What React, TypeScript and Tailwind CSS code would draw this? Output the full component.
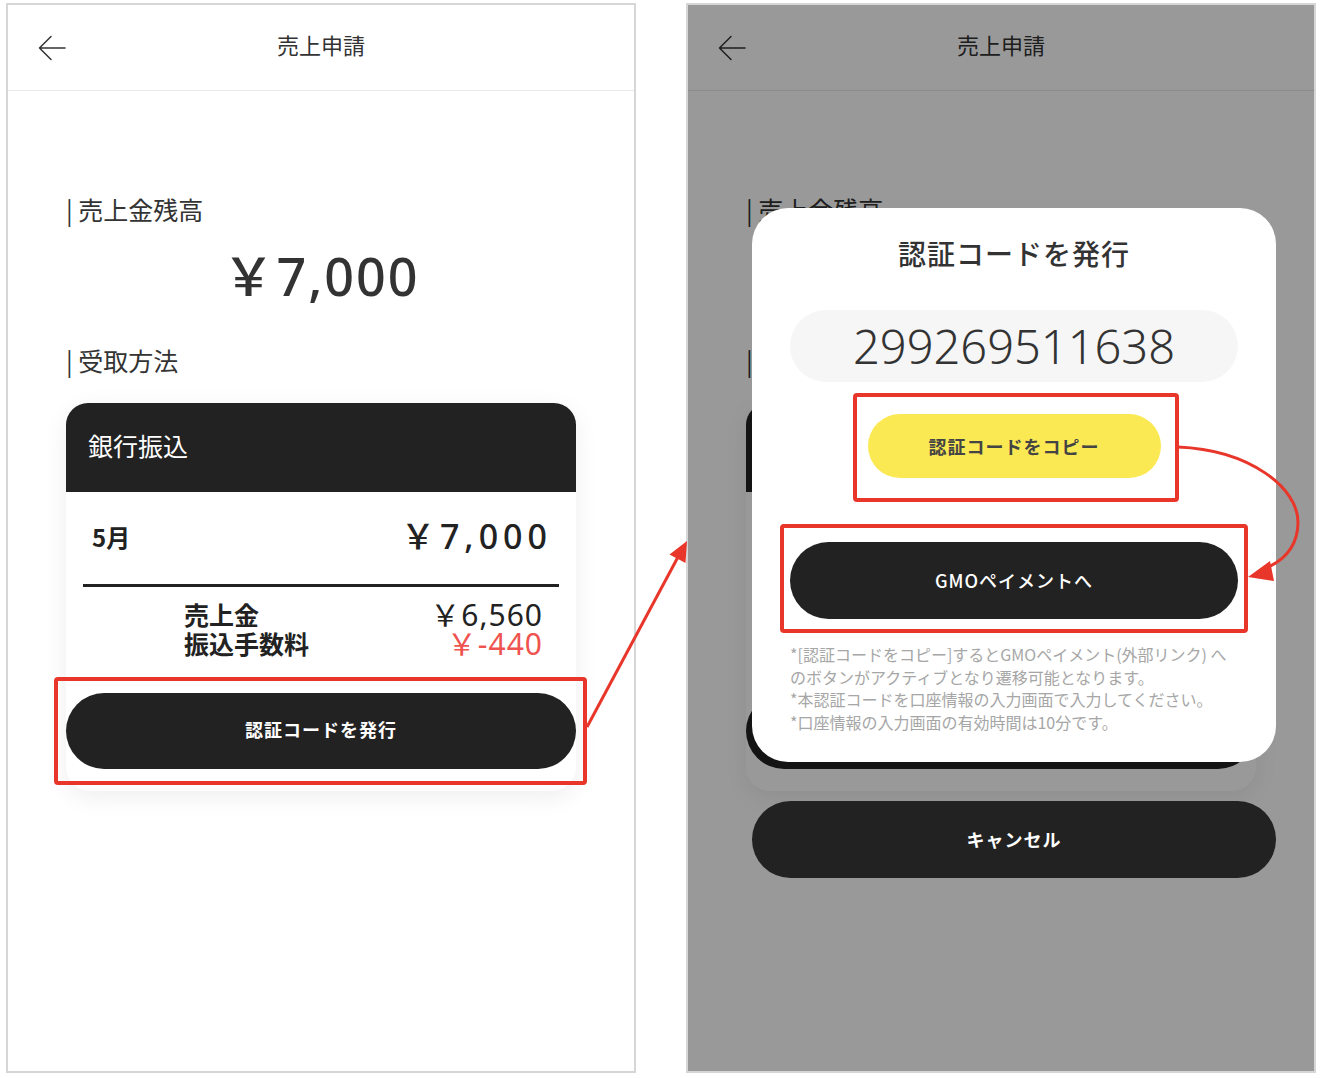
import React from "react";

const JP = "font-['Noto_Sans_CJK_JP','Noto_Sans',sans-serif]";
const NUM = "font-['Noto_Sans','Noto_Sans_CJK_JP',sans-serif]";

function BackArrow() {
  return (
    <svg width="28" height="26" viewBox="0 0 28 26" fill="none" stroke="#333" strokeWidth="1.5" strokeLinecap="round" strokeLinejoin="round">
      <path d="M27 13H1.5M13 1.5L1.5 13 13 24.5" />
    </svg>
  );
}

function Header() {
  return (
    <div className="grid h-[86px] grid-cols-[1fr_auto_1fr] items-center border-b border-[#e9e9e9] px-[30px]">
      <BackArrow />
      <div className={`${JP} mb-[7px] text-[22px] leading-none text-[#333]`}>売上申請</div>
      <div />
    </div>
  );
}

function SalesBody() {
  return (
    <div className={`${JP} px-[58px] text-[#333]`}>
      <div className="mt-[103px] text-[25px] leading-[30px]">| 売上金残高</div>
      <div className={`${NUM} mt-[24px] text-center text-[52px] font-medium leading-[56px] tracking-[2px]`}>￥7,000</div>
      <div className="mt-[41px] text-[25px] leading-[30px]">| 受取方法</div>

      {/* bank transfer card */}
      <div className="mt-[28px] rounded-[24px] bg-white pb-[22px] shadow-[0_6px_24px_rgba(0,0,0,0.07)]">
        <div className="flex h-[89px] items-center rounded-t-[22px] bg-[#222] pb-[3px] pl-[22px] text-[25px] text-white">
          銀行振込
        </div>
        <div className="flex h-[92px] items-center justify-between pb-[3px] pl-[26px] pr-[24px]">
          <span className="text-[24px] font-bold text-[#222]">5月</span>
          <span className={`${NUM} text-[34px] font-medium tracking-[5px] text-[#222]`}>￥7,000</span>
        </div>
        <div className="mx-[17px] h-[3px] bg-[#222]" />
        <div className="flex justify-between pl-[118px] pr-[33px] pt-[13px]">
          <div className="text-[25px] font-bold leading-[29px] text-[#222]">
            <div>売上金</div>
            <div>振込手数料</div>
          </div>
          <div className={`${NUM} text-right text-[30px] leading-[29px] tracking-[1px]`}>
            <div className="text-[#222]">￥6,560</div>
            <div className="text-[#ef5350]">￥-440</div>
          </div>
        </div>
        <button className="mt-[35px] flex h-[76px] w-full items-center justify-center rounded-full bg-[#222] pb-[3px] text-[18px] font-bold tracking-[1px] text-white">
          認証コードを発行
        </button>
      </div>
    </div>
  );
}

function CodeDialog() {
  return (
    <div className={`${JP} absolute inset-0 flex flex-col bg-black/40 pl-[64px] pr-[38px] pt-[203px]`}>
      <div className="rounded-[36px] bg-white px-[38px] pb-[29px] pt-[28px]">
        <div className="text-center text-[28px] font-medium leading-[34px] tracking-[1px] text-[#333]">
          認証コードを発行
        </div>
        <div className={`${NUM} mt-[40px] flex h-[72px] items-center justify-center rounded-full bg-[#f6f6f6] text-[47px] font-light text-[#333]`}>
          299269511638
        </div>
        <button className="mx-auto mt-[32px] flex h-[64px] w-[293px] items-center justify-center rounded-full bg-[#fbe953] text-[18px] font-bold tracking-[1px] text-[#444]">
          認証コードをコピー
        </button>
        <button className="mt-[64px] flex h-[77px] w-full items-center justify-center rounded-full bg-[#222] text-[18px] font-medium tracking-[1px] text-white">
          GMOペイメントへ
        </button>
        <p className="mt-[24px] text-[16px] leading-[22.5px] text-[#a6a6a6]">
          *[認証コードをコピー]するとGMOペイメント(外部リンク) へ
          <br />
          のボタンがアクティブとなり遷移可能となります。
          <br />
          *本認証コードを口座情報の入力画面で入力してください。
          <br />
          *口座情報の入力画面の有効時間は10分です。
        </p>
      </div>
      <button className="mt-[39px] flex h-[77px] w-full items-center justify-center rounded-full bg-[#222] text-[18px] font-bold tracking-[1px] text-white">
        キャンセル
      </button>
    </div>
  );
}

function Phone({ withDialog = false }: { withDialog?: boolean }) {
  return (
    <div className="relative h-[1070px] w-[630px] overflow-hidden border-2 border-[#d6d6d6] bg-white">
      <Header />
      <SalesBody />
      {withDialog && <CodeDialog />}
    </div>
  );
}

// red callouts drawn on top of both screens
function Callouts() {
  const red = "#e9362a";
  return (
    <svg className="pointer-events-none absolute inset-0" width="1320" height="1078" viewBox="0 0 1320 1078" fill="none">
      <rect x="56" y="679" width="529" height="104" rx="2" stroke={red} strokeWidth="4" />
      <rect x="855" y="395" width="322" height="105" rx="2" stroke={red} strokeWidth="4" />
      <rect x="782" y="526" width="464" height="105" rx="2" stroke={red} strokeWidth="4" />
      <path d="M587 727L678 557" stroke={red} strokeWidth="3" />
      <polygon points="687,541 685.5,563 669.5,554.5" fill={red} />
      <path d="M1178 447C1250 450 1298 488 1298 522C1298 545 1286 560 1264 569" stroke={red} strokeWidth="3" />
      <polygon points="1248,577 1270,561 1274,581" fill={red} />
    </svg>
  );
}

export default function App() {
  return (
    <div className="relative h-[1078px] w-[1320px] overflow-hidden bg-white">
      <div className="flex gap-[50px] pl-[6px] pt-[3px]">
        <Phone />
        <Phone withDialog />
      </div>
      <Callouts />
    </div>
  );
}
